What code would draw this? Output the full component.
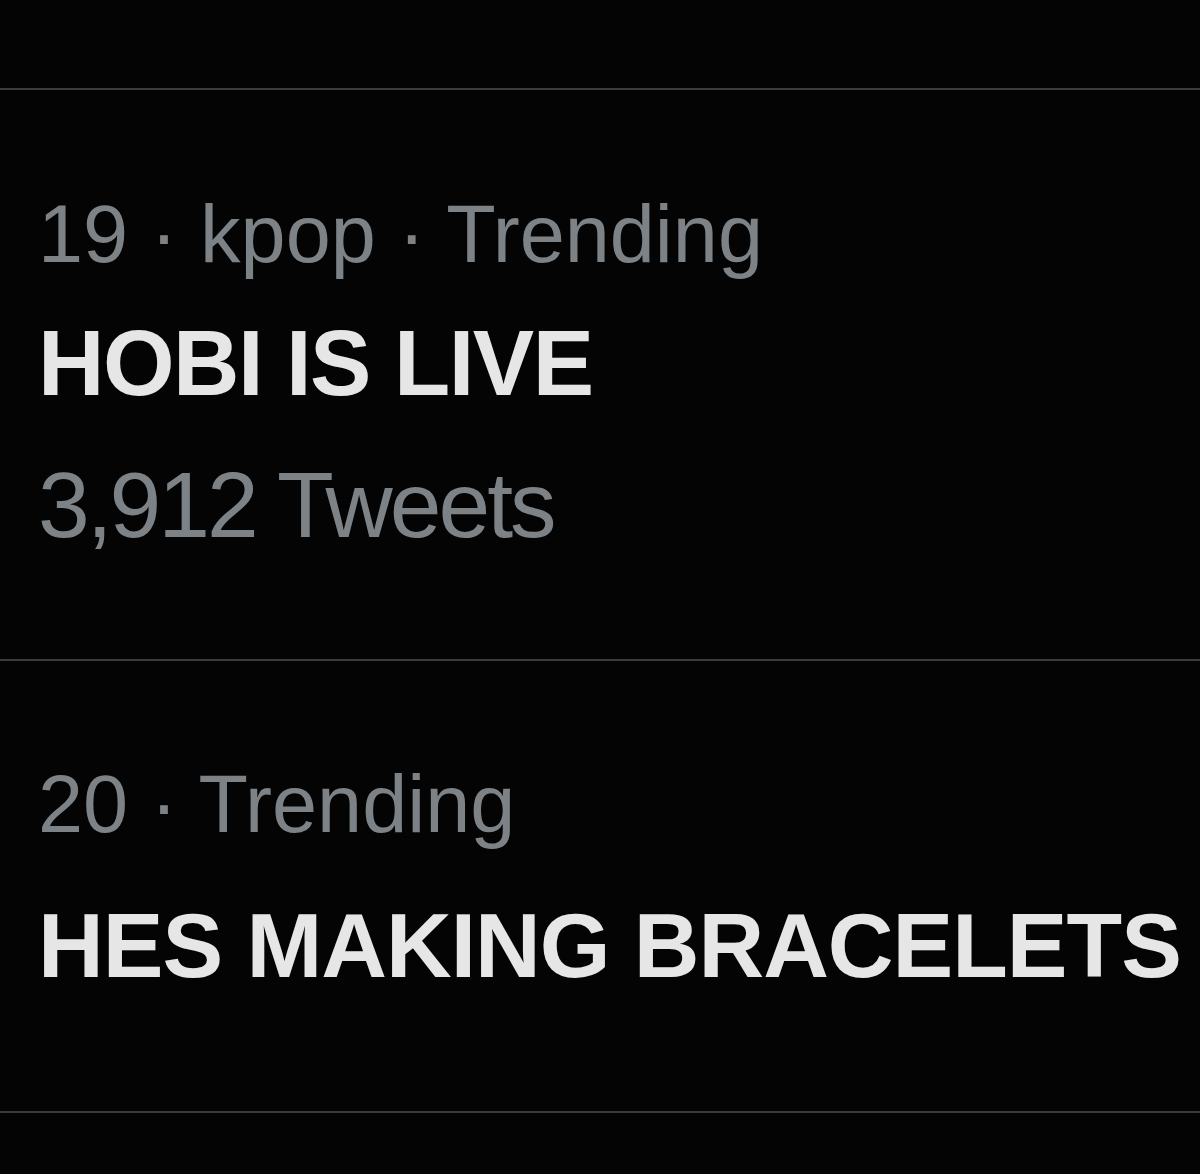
export default function App() {
  const font = { fontFamily: '"Liberation Sans", Arial, sans-serif' };
  return (
    <div className="w-[1200px] h-[1174px] bg-[#040404] overflow-hidden" style={font}>
      <div className="h-[88px]" />
      <div className="h-[2px] bg-[#3c3c3c]" />
      <div className="pl-[38px] pt-[104px] pb-[107px]">
        <div className="text-[81px] leading-none text-[#7d8287] whitespace-nowrap">19 · kpop · Trending</div>
        <div className="mt-[42px] text-[92px] leading-none font-bold tracking-[-1.5px] text-[#e6e6e6] whitespace-nowrap">HOBI IS LIVE</div>
        <div className="mt-[50px] text-[93px] leading-none tracking-[-3px] text-[#7d8287] whitespace-nowrap">3,912 Tweets</div>
      </div>
      <div className="h-[2px] bg-[#3c3c3c]" />
      <div className="pl-[38px] pt-[103px] pb-[120px]">
        <div className="text-[81px] leading-none text-[#7d8287] whitespace-nowrap">20 · Trending</div>
        <div className="mt-[55px] text-[91px] leading-none font-bold tracking-[-1px] text-[#e6e6e6] whitespace-nowrap">HES MAKING BRACELETS</div>
      </div>
      <div className="h-[2px] bg-[#3c3c3c]" />
    </div>
  );
}
